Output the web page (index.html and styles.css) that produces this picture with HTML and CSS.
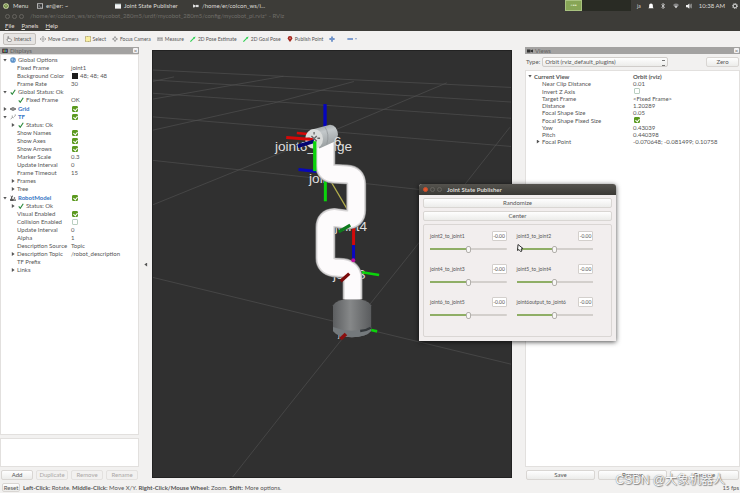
FILE: index.html
```html
<!DOCTYPE html>
<html lang="en">
<head>
    <meta charset="utf-8">
    <title>RViz</title>
    <link rel="stylesheet" href="styles.css">
</head>
<body>
    <header class="desktop-bar">
        <div class="desk-menu">
            <svg class="icon" viewBox="0 0 16 16"><circle cx="8" cy="8" r="7.500" fill="#c9d8a0"/><circle cx="8" cy="8" r="4" fill="none" stroke="#5f7a35" stroke-width="2"/><path d="M5 5v5h5V6" fill="none" stroke="#5f7a35" stroke-width="1.500"/></svg>
            Menu
        </div>
        <div class="task">
            <svg class="icon" viewBox="0 0 16 16"><rect x="1" y="2" width="14" height="12" fill="#333" stroke="#d8d8d8" stroke-width="2"/><path d="M4 6l3 2-3 2M8 11h4" stroke="#ddd" stroke-width="1.500" fill="none"/></svg>
            er@er: ~
        </div>
        <div class="task">
            <svg class="icon" viewBox="0 0 16 16"><rect y="2" width="16" height="13" fill="#f4f4f4"/><path d="M0 4h16" stroke="#bcc" stroke-width="2"/></svg>
            Joint State Publisher
        </div>
        <div class="task">
            <svg class="icon" viewBox="0 0 16 16"><path d="M1 4v8M4 5v6M1 8h7" stroke="#ddd" stroke-width="3"/><path d="M8 5h7v6H8z" fill="#ddd"/></svg>
            /home/er/colcon_ws/i...
        </div>
        <div class="workspaces"><span class="space current">▫▪▪</span><span class="space"></span></div>
        <div class="tray">
            <span class="lang">ja</span>
            <svg class="icon" viewBox="0 0 16 16"><path d="M8 1c3 0 5 2 5 6v4l2 3H1l2-3V7c0-4 2-6 5-6z" fill="#fff"/></svg>
            <svg class="icon" viewBox="0 0 16 16"><path d="M4 4l8 7-4 4V1l4 4-8 7" fill="none" stroke="#ddd" stroke-width="2"/></svg>
            <svg class="icon" viewBox="0 0 16 16"><path d="M0 5q8-7 16 0l-8 9z" fill="#888"/><path d="M4 9q4-3 8 0l-4 5z" fill="#ccc"/></svg>
            <svg class="icon" viewBox="0 0 16 16"><path d="M0 5h4l5-4v14l-5-4H0z" fill="#eee"/><path d="M11 4v8M14 2v12" stroke="#bbb" stroke-width="2"/></svg>
            <span>10:38 AM</span>
            <svg class="icon" viewBox="0 0 16 16"><circle cx="8" cy="8" r="5" fill="none" stroke="#e4e4e4" stroke-width="2.500"/><circle cx="8" cy="8" r="7" fill="none" stroke="#e4e4e4" stroke-width="2" stroke-dasharray="2.750"/></svg>
        </div>
    </header>
    <div class="title-bar">
        <span class="win-dot"></span><span class="win-dot"></span><span class="win-dot"></span>
        <span class="title-path">/home/er/colcon_ws/src/mycobot_280m5/urdf/mycobot_280m5/config/mycobot_pi.rviz* - RViz</span>
    </div>
    <nav class="menu-bar">
        <a href="#"><u>F</u>ile</a>
        <a href="#"><u>P</u>anels</a>
        <a href="#"><u>H</u>elp</a>
    </nav>

    <div class="toolbar">
        <button class="tool selected"><svg class="icon" viewBox="0 0 16 16"><path d="M5 9V2q1-2 2 0v5l6 1q2 1 1 4l-1 3H6L2 10q1-2 3-1z" fill="#fff" stroke="#555" stroke-width="1.500"/></svg>Interact</button>
        <button class="tool"><svg class="icon" viewBox="0 0 16 16"><path d="M8 1v14M1 8h14M5 4l3-3 3 3M5 12l3 3 3-3M3 5L0 8l3 3M13 5l3 3-3 3" fill="none" stroke="#888" stroke-width="1.500"/></svg>Move Camera</button>
        <button class="tool"><svg class="icon" viewBox="0 0 16 16"><rect x="1" y="1" width="14" height="14" fill="#fbf0a0" stroke="#9a8c50" stroke-width="2" stroke-dasharray="3 1"/></svg>Select</button>
        <button class="tool"><svg class="icon" viewBox="0 0 16 16"><path d="M8 0v16M0 8h16" stroke="#888" stroke-width="2"/><circle cx="8" cy="8" r="4" fill="#eee" stroke="#888" stroke-width="2"/></svg>Focus Camera</button>
        <button class="tool"><svg class="icon" viewBox="0 0 16 16"><rect x="0" y="5" width="16" height="7" fill="#ccc" stroke="#777"/><path d="M4 5v4M8 5v4M12 5v4" stroke="#555"/></svg>Measure</button>
        <button class="tool"><svg class="icon" viewBox="0 0 16 16"><path d="M1 15L11 5" stroke="#2ed052" stroke-width="3"/><path d="M8 4l7-3-3 7z" fill="#2ed052"/></svg>2D Pose Estimate</button>
        <button class="tool"><svg class="icon" viewBox="0 0 16 16"><path d="M1 15L11 5" stroke="#2ed052" stroke-width="3"/><path d="M8 4l7-3-3 7z" fill="#2ed052"/></svg>2D Goal Pose</button>
        <button class="tool"><svg class="icon" viewBox="0 0 16 16"><path d="M8 16Q2 9 2 6a6 6 0 0 1 12 0q0 3-6 10z" fill="#a3261c"/><circle cx="8" cy="6" r="2" fill="#e99"/></svg>Publish Point</button>
        <button class="tool" aria-label="Add tool"><svg class="icon" viewBox="0 0 16 16"><path d="M8 1v14M1 8h14" stroke="#6f93c9" stroke-width="5"/></svg></button>
        <button class="tool last" aria-label="Remove tool"><svg class="icon" viewBox="0 0 16 16"><path d="M1 8h15" stroke="#5b83c4" stroke-width="4"/></svg><i class="drop"></i></button>
    </div>

    <main class="workspace">
        <section class="panel displays">
            <h2 class="panel-head">
                <svg class="icon" viewBox="0 0 16 16"><rect x="1" y="2" width="14" height="11" fill="#222"/><path d="M3 4h3v7H3z" fill="#c55"/><path d="M6 4h4v7H6z" fill="#6b6"/><path d="M10 4h3v7h-3z" fill="#56c"/></svg>
                Displays<button class="close" aria-label="Close Displays">×</button>
            </h2>
            <div class="tree">
                <div class="group">
                    <div class="row"><span class="name"><i class="arrow open"></i><span class="glyph"><svg class="icon" viewBox="0 0 16 16"><circle cx="8" cy="8" r="7.500" fill="#5c92c9"/><path d="M3 5l4-2 2 4-3 4zM10 8l4-1-2 5z" fill="#a6c4e2"/></svg></span>Global Options</span></div>
                    <div class="row sub"><span class="name"><i class="arrow"></i>Fixed Frame</span><span class="value">joint1</span></div>
                    <div class="row sub"><span class="name"><i class="arrow"></i>Background Color</span><span class="value"><i class="swatch"></i>48; 48; 48</span></div>
                    <div class="row sub"><span class="name"><i class="arrow"></i>Frame Rate</span><span class="value">30</span></div>
                    <div class="row"><span class="name"><i class="arrow open"></i><span class="glyph"><svg class="icon" viewBox="0 0 16 16"><path d="M2 9l4 5 8-12" class="tick"/></svg></span>Global Status: Ok</span></div>
                    <div class="row sub"><span class="name"><i class="arrow"></i><span class="glyph"><svg class="icon" viewBox="0 0 16 16"><path d="M2 9l4 5 8-12" class="tick"/></svg></span>Fixed Frame</span><span class="value">OK</span></div>
                </div>
                <div class="group">
                    <div class="row"><span class="name"><i class="arrow closed"></i><span class="glyph"><svg class="icon" viewBox="0 0 16 16"><path d="M0 8l8-4 8 4-8 4z" fill="#999" stroke="#555" stroke-width="2"/></svg></span><label class="display" for="grid">Grid</label></span><span class="value"><input type="checkbox" id="grid" checked></span></div>
                    <div class="row"><span class="name"><i class="arrow open"></i><span class="glyph"><svg class="icon" viewBox="0 0 16 16"><path d="M2 14l4-5V4M6 9l4 1M11 7l3-2V1" fill="none" stroke="#888" stroke-width="2"/></svg></span><label class="display" for="tf">TF</label></span><span class="value"><input type="checkbox" id="tf" checked></span></div>
                    <div class="row sub"><span class="name"><i class="arrow closed"></i><span class="glyph"><svg class="icon" viewBox="0 0 16 16"><path d="M2 9l4 5 8-12" class="tick"/></svg></span>Status: Ok</span></div>
                    <div class="row sub"><span class="name"><i class="arrow"></i><label for="names">Show Names</label></span><span class="value"><input type="checkbox" id="names" checked></span></div>
                    <div class="row sub"><span class="name"><i class="arrow"></i><label for="axes">Show Axes</label></span><span class="value"><input type="checkbox" id="axes" checked></span></div>
                    <div class="row sub"><span class="name"><i class="arrow"></i><label for="arrows">Show Arrows</label></span><span class="value"><input type="checkbox" id="arrows" checked></span></div>
                    <div class="row sub"><span class="name"><i class="arrow"></i>Marker Scale</span><span class="value">0.3</span></div>
                    <div class="row sub"><span class="name"><i class="arrow"></i>Update Interval</span><span class="value">0</span></div>
                    <div class="row sub"><span class="name"><i class="arrow"></i>Frame Timeout</span><span class="value">15</span></div>
                    <div class="row sub"><span class="name"><i class="arrow closed"></i>Frames</span></div>
                    <div class="row sub"><span class="name"><i class="arrow closed"></i>Tree</span></div>
                </div>
                <div class="group">
                    <div class="row"><span class="name"><i class="arrow open"></i><span class="glyph"><svg class="icon" viewBox="0 0 16 16"><path d="M1 15h8v-4H1zM4 11V5l4-3M4 5L2 2" fill="#444" stroke="#444" stroke-width="2"/><circle cx="12" cy="8" r="2" fill="#444"/><path d="M10 12h6v3h-6z" fill="#444"/></svg></span><label class="display" for="model">RobotModel</label></span><span class="value"><input type="checkbox" id="model" checked></span></div>
                    <div class="row sub"><span class="name"><i class="arrow closed"></i><span class="glyph"><svg class="icon" viewBox="0 0 16 16"><path d="M2 9l4 5 8-12" class="tick"/></svg></span>Status: Ok</span></div>
                    <div class="row sub"><span class="name"><i class="arrow"></i><label for="visual">Visual Enabled</label></span><span class="value"><input type="checkbox" id="visual" checked></span></div>
                    <div class="row sub"><span class="name"><i class="arrow"></i><label for="collision">Collision Enabled</label></span><span class="value"><input type="checkbox" id="collision"></span></div>
                    <div class="row sub"><span class="name"><i class="arrow"></i>Update Interval</span><span class="value">0</span></div>
                    <div class="row sub"><span class="name"><i class="arrow"></i>Alpha</span><span class="value">1</span></div>
                    <div class="row sub"><span class="name"><i class="arrow"></i>Description Source</span><span class="value">Topic</span></div>
                    <div class="row sub"><span class="name"><i class="arrow closed"></i>Description Topic</span><span class="value">/robot_description</span></div>
                    <div class="row sub"><span class="name"><i class="arrow"></i>TF Prefix</span></div>
                    <div class="row sub"><span class="name"><i class="arrow closed"></i>Links</span></div>
                </div>
            </div>
            <div class="help-box"></div>
            <div class="actions">
                <button>Add</button>
                <button disabled>Duplicate</button>
                <button disabled>Remove</button>
                <button disabled>Rename</button>
            </div>
        </section>

        <div class="splitter"><i class="arrow back"></i></div>

        <div class="viewport">
            <svg class="scene" viewBox="6 18 1080 1284" preserveAspectRatio="xMidYMid slice">
                <defs>
                    <linearGradient id="base" x1="0" x2="1">
                        <stop offset="0" stop-color="#5c5e60"/>
                        <stop offset="0.450" stop-color="#868889"/>
                        <stop offset="1" stop-color="#5a5c5e"/>
                    </linearGradient>
                    <linearGradient id="head" x1="0" y1="0" x2="0.300" y2="1">
                        <stop offset="0" stop-color="#8f9496"/>
                        <stop offset="0.400" stop-color="#c3c8ca"/>
                        <stop offset="1" stop-color="#9a9fa1"/>
                    </linearGradient>
                </defs>
                <!-- ground grid -->
                <g class="grid-lines">
                    <path d="M0 75L1090 128M0 105L1090 172M0 145L1090 221M0 216L1090 306M0 347L1090 466M0 699L1090 963"/>
                    <path d="M245 1304L415 1088L775 638L1082 248M0 484L380 330L892 114M0 258L370 175L612 110M0 164L400 94M0 111L70 96"/>
                </g>
                <!-- frame names -->
                <g class="frame-name">
                    <text x="374" y="319">joint6_flange</text>
                    <text x="477" y="416">joint5</text>
                    <text x="554" y="562">joint4</text>
                    <text x="549" y="706">joint3</text>
                </g>
                <text class="frame-name small" x="564" y="881">joint1</text>
                <path d="M545 415L592 495" stroke="#b5b04c" stroke-width="4"/>
                <path d="M526 405V471" stroke="#0bd30b" stroke-width="9"/>
                <path d="M445 375L500 381" stroke="#0808b8" stroke-width="9"/>
                <path d="M525 178V250" stroke="#0505bd" stroke-width="10"/>
                <path d="M440 265L480 269" stroke="#d40808" stroke-width="8"/>
                <path d="M611 550V603" stroke="#d20a0a" stroke-width="9"/>
                <path d="M611 603V652" stroke="#0808c4" stroke-width="9"/>
                <path d="M636 685L688 693" stroke="#0bd30b" stroke-width="8"/>
                <!-- base -->
                <path d="M549 784Q560 766 606 764Q654 766 664 784V862Q650 880 606 881Q562 880 549 862z" fill="url(#base)"/>
                <path d="M549 850Q606 872 664 850V862Q650 880 606 881Q562 880 549 862z" fill="#74797c"/>
                <path d="M631 862Q650 860 663 852" fill="none" stroke="#34383b" stroke-width="7"/>
                <path d="M664 859L682 863" stroke="#0bd30b" stroke-width="8"/>
                <path d="M572 886L588 871" stroke="#8a0f0f" stroke-width="11"/>
                <!-- arm links -->
                <g class="arm">
                    <path class="edge" d="M526 290V364Q526 387 553 388L590 390Q619 391 619 420V498Q619 526 590 526L553 521Q526 522 526 550V642Q526 666 552 670L578 672Q608 676 608 704V766"/>
                    <path class="shade" d="M526 290V364Q526 387 553 388L590 390Q619 391 619 420V498Q619 526 590 526L553 521Q526 522 526 550V642Q526 666 552 670L578 672Q608 676 608 704V766"/>
                    <path class="skin" d="M526 290V364Q526 387 553 388L590 390Q619 391 619 420V498Q619 526 590 526L553 521Q526 522 526 550V642Q526 666 552 670L578 672Q608 676 608 704V766"/>
                </g>
                <path d="M566 563L601 543" stroke="#0e7a1d" stroke-width="10"/>
                <path d="M572 712L598 689" stroke="#7c0b0b" stroke-width="10"/>
                <circle cx="610" cy="649" r="6" fill="#c2109a"/>
                <!-- wrist and flange -->
                <path d="M480 256L540 240Q562 242 564 270Q562 288 548 294L508 312z" fill="url(#head)"/>
                <path d="M524 246Q540 268 530 300" fill="none" stroke="#8a8f91" stroke-width="2"/>
                <ellipse cx="492" cy="283" rx="27" ry="30" fill="#dadcdb"/>
                <path d="M492 262v8M492 292v8M472 281h8M502 281h8M484 274l16 16M500 274l-16 16" stroke="#666" stroke-width="4"/>
                <path d="M408 279L488 285" stroke="#d40808" stroke-width="9"/>
                <path d="M443 305L492 290" stroke="#050570" stroke-width="11"/>
                <path d="M494 290V380" stroke="#0bd30b" stroke-width="10"/>
                <text class="frame-name" x="551" y="303">6</text>
            </svg>
        </div>

        <div class="splitter"></div>

        <section class="panel views">
            <h2 class="panel-head">
                <svg class="icon" viewBox="0 0 16 16"><path d="M0 4h9v8H0zM10 6l6-2v8l-6-2z" fill="#333"/></svg>
                Views<button class="close" aria-label="Close Views">×</button>
            </h2>
            <div class="type-row">
                <label for="type">Type:</label>
                <span class="select-wrap"><select id="type"><option>Orbit (rviz_default_plugins)</option></select></span>
                <button class="zero">Zero</button>
            </div>
            <div class="tree">
                <div class="row head"><span class="name"><i class="arrow open"></i>Current View</span><span class="value">Orbit (rviz)</span></div>
                <div class="row sub"><span class="name"><i class="arrow"></i>Near Clip Distance</span><span class="value">0.01</span></div>
                <div class="row sub check"><span class="name"><i class="arrow"></i><label for="invert">Invert Z Axis</label></span><span class="value"><input type="checkbox" id="invert"></span></div>
                <div class="row sub"><span class="name"><i class="arrow"></i>Target Frame</span><span class="value">&lt;Fixed Frame&gt;</span></div>
                <div class="row sub"><span class="name"><i class="arrow"></i>Distance</span><span class="value">1.20289</span></div>
                <div class="row sub"><span class="name"><i class="arrow"></i>Focal Shape Size</span><span class="value">0.05</span></div>
                <div class="row sub check"><span class="name"><i class="arrow"></i><label for="focal">Focal Shape Fixed Size</label></span><span class="value"><input type="checkbox" id="focal" checked></span></div>
                <div class="row sub"><span class="name"><i class="arrow"></i>Yaw</span><span class="value">0.43039</span></div>
                <div class="row sub"><span class="name"><i class="arrow"></i>Pitch</span><span class="value">0.440398</span></div>
                <div class="row sub"><span class="name"><i class="arrow closed"></i>Focal Point</span><span class="value">-0.070648; -0.081499; 0.10758</span></div>
            </div>
            <div class="actions">
                <button>Save</button>
                <button>Remove</button>
                <button>Rename</button>
            </div>
        </section>
    </main>

    <footer class="status-bar">
        <button>Reset</button>
        <span><b>Left-Click:</b> Rotate. <b>Middle-Click:</b> Move X/Y. <b>Right-Click/Mouse Wheel:</b> Zoom. <b>Shift:</b> More options.</span>
        <span class="fps">15 fps</span>
    </footer>

    <!-- floating joint slider window -->
    <section class="dialog">
        <h2 class="dialog-title"><span class="win-dot red"></span><span class="win-dot"></span><span class="win-dot"></span><span>Joint State Publisher</span></h2>
        <div class="dialog-body">
            <button class="wide">Randomize</button>
            <button class="wide">Center</button>
            <div class="joints">
                <div class="joint"><label for="j1">joint2_to_joint1</label><input type="text" value="-0.00" aria-label="joint2_to_joint1 value"><input type="range" id="j1"></div>
                <div class="joint"><label for="j2">joint3_to_joint2</label><input type="text" value="-0.00" aria-label="joint3_to_joint2 value"><input type="range" id="j2"></div>
                <div class="joint"><label for="j3">joint4_to_joint3</label><input type="text" value="-0.00" aria-label="joint4_to_joint3 value"><input type="range" id="j3"></div>
                <div class="joint"><label for="j4">joint5_to_joint4</label><input type="text" value="-0.00" aria-label="joint5_to_joint4 value"><input type="range" id="j4"></div>
                <div class="joint"><label for="j5">joint6_to_joint5</label><input type="text" value="-0.00" aria-label="joint6_to_joint5 value"><input type="range" id="j5"></div>
                <div class="joint"><label for="j6">joint6output_to_joint6</label><input type="text" value="-0.00" aria-label="joint6output_to_joint6 value"><input type="range" id="j6"></div>
            </div>
        </div>
        <svg class="pointer" viewBox="0 0 16 16"><path d="M4 1l10 8-4 1 2 4-3 1-3-4-3 2z" fill="#fff" stroke="#333" stroke-width="2"/></svg>
    </section>

    <div class="watermark">CSDN @大象机器人</div>
</body>
</html>
```

FILE: styles.css
```css
* {
    box-sizing: border-box;
}

body {
    margin: 0;
    height: 100vh;
    display: flex;
    flex-direction: column;
    overflow: hidden;
    position: relative;
    background: #f2f1f0;
    color: #555;
    font: 6px/8px Lato, "Noto Sans CJK SC", sans-serif;
}

button, input, select {
    font: inherit;
    color: inherit;
    margin: 0;
    padding: 0;
}

h2 {
    margin: 0;
    font: inherit;
}

a {
    color: inherit;
    text-decoration: none;
}

.icon {
    width: 6px;
    height: 6px;
    flex: none;
}

/* desktop panel */
.desktop-bar {
    height: 11px;
    display: flex;
    align-items: center;
    background: #3d3c38;
    color: #dcdad5;
}

.desk-menu {
    width: 37px;
    padding-left: 3px;
    display: flex;
    align-items: center;
    gap: 4px;
}

.task {
    width: 78px;
    display: flex;
    align-items: center;
    gap: 3px;
    white-space: nowrap;
}

.workspaces {
    display: flex;
    align-self: stretch;
    margin-left: auto;
    background: #292b24;
}

.space {
    width: 49px;
}

.space.current {
    width: 17px;
    background: #87a556;
    border: 1px solid #a9c280;
    color: #dbe8c2;
    text-align: center;
    font-size: 5px;
}

.tray {
    width: 109px;
    padding: 0 2px 0 6px;
    display: flex;
    align-items: center;
    justify-content: space-between;
}

.lang {
    font-size: 5px;
}

.title-bar {
    height: 10px;
    padding-left: 5px;
    display: flex;
    align-items: center;
    gap: 2px;
    background: #3d3c38;
    color: #6f6d68;
    white-space: nowrap;
}

.title-path {
    margin-left: 4px;
}

.win-dot {
    width: 5px;
    height: 5px;
    border: 1px solid #66645f;
    border-radius: 50%;
}

.win-dot.red {
    background: #e2552c;
    border-color: #c8502e;
}

.menu-bar {
    height: 10px;
    padding-left: 5px;
    display: flex;
    align-items: center;
    gap: 7px;
    background: #3d3c38;
    color: #e0ded9;
}

/* tools */
.toolbar {
    height: 16px;
    padding-left: 3px;
    display: flex;
    align-items: center;
    gap: 2px;
    font-size: 5px;
}

.tool {
    height: 12px;
    padding: 0 2px;
    display: flex;
    align-items: center;
    gap: 2px;
    border: 0;
    background: none;
}

.tool.selected {
    padding: 0 4px 0 2px;
    border: 1px solid #c4c0bc;
    border-radius: 2px;
    background: #e6e4e2;
}

.tool.last {
    margin-left: 6px;
}

.drop {
    border: 1px solid transparent;
    border-top: 2px solid #8aa3c9;
}

.workspace {
    flex: 1;
    min-height: 0;
    display: flex;
}

.panel {
    display: flex;
    flex-direction: column;
    min-height: 0;
}

.displays {
    width: 139px;
}

.views {
    width: 215px;
}

.panel-head {
    height: 7px;
    padding: 0 1px 0 2px;
    display: flex;
    align-items: center;
    gap: 2px;
    background: #a3a2a1;
    color: #626160;
    line-height: 7px;
}

.close {
    width: 5px;
    height: 5px;
    margin-left: auto;
    border: 0;
    border-radius: 1px;
    background: #f4f4f4;
    line-height: 5px;
}

/* property trees */
.tree {
    flex: 1;
    padding-top: 1px;
    background: #fff;
    border: 1px solid #e2e0de;
    white-space: nowrap;
}

.group {
    padding-bottom: 1px;
}

.row {
    height: 8px;
    display: flex;
    align-items: center;
}

.name {
    width: 70px;
    display: flex;
    align-items: center;
}

.sub .name {
    padding-left: 8px;
}

.value {
    display: flex;
    align-items: center;
}

.glyph {
    width: 9px;
    height: 6px;
    padding-left: 1px;
}

.arrow {
    width: 8px;
    height: 4px;
    flex: none;
}

.arrow.open, .arrow.closed, .arrow.back {
    width: 4px;
    margin: 0 2px;
    background: #555;
}

.arrow.open {
    height: 3px;
    clip-path: polygon(0 0, 100% 0, 50% 100%);
}

.arrow.closed {
    clip-path: polygon(20% 0, 90% 50%, 20% 100%);
}

.arrow.back {
    clip-path: polygon(90% 0, 20% 50%, 90% 100%);
}

.display {
    color: #3574c4;
    font-weight: bold;
}

.tick {
    fill: none;
    stroke: #2c8a3c;
    stroke-width: 3;
}

.swatch {
    width: 6px;
    height: 6px;
    margin: 0 2px 0 1px;
    background: #1c1c1c;
}

input[type="checkbox"] {
    appearance: none;
    width: 6px;
    height: 6px;
    margin-left: 1px;
    border: 1px solid #b9cfc0;
    border-radius: 1px;
    background: #fff;
    position: relative;
}

input[type="checkbox"]:checked {
    border-color: #5c9a20;
    background: #5c9a20;
}

input[type="checkbox"]:checked::after {
    content: '';
    position: absolute;
    left: 1px;
    top: 0;
    width: 2px;
    height: 3px;
    border: solid #fff;
    border-width: 0 1px 1px 0;
    transform: rotate(40deg);
}

.help-box {
    height: 29px;
    margin-top: 3px;
    background: #fff;
    border: 1px solid #e2e0de;
}

.actions {
    padding: 3px 1px 2px;
    display: flex;
    gap: 3px;
}

.actions button, .status-bar button, .zero, .wide {
    flex: 1;
    height: 10px;
    border: 1px solid #d9d6d3;
    border-radius: 2px;
    background: linear-gradient(#fefefe, #ececea);
    line-height: 8px;
}

.actions button:disabled {
    border-color: #e3e1df;
    background: #f2f1f0;
    color: #aaa8a6;
}

.splitter {
    width: 13px;
    display: flex;
    align-items: center;
    justify-content: center;
}

.viewport {
    flex: 1;
    min-width: 0;
    margin: 3px 0 4px;
    background: #303030;
    border: 1px solid #222;
}

.scene {
    display: block;
    width: 100%;
    height: 100%;
}

.grid-lines {
    fill: none;
    stroke: #505050;
    stroke-width: 2;
}

.frame-name {
    fill: #dedede;
    font-family: "Liberation Sans", sans-serif;
    font-size: 41px;
}

.frame-name.small {
    font-size: 24px;
}

.arm path {
    fill: none;
}

.arm .edge {
    stroke: #8c8c8c;
    stroke-width: 60;
}

.arm .shade {
    stroke: #d6d4d5;
    stroke-width: 56;
}

.arm .skin {
    stroke: #fdfbfc;
    stroke-width: 48;
}

/* views panel */
.type-row {
    padding: 3px 1px;
    display: flex;
    align-items: center;
    gap: 2px;
}

.select-wrap {
    width: 126px;
    position: relative;
}

.select-wrap::after {
    content: '';
    position: absolute;
    right: 3px;
    top: 3px;
    width: 3px;
    height: 4px;
    border: solid #777;
    border-width: 1px 0;
}

select {
    appearance: none;
    display: block;
    width: 100%;
    height: 10px;
    padding-left: 2px;
    border: 1px solid #d0cdca;
    border-radius: 2px;
    background: linear-gradient(#fefefe, #ececea);
}

.zero {
    flex: none;
    width: 33px;
    margin-left: auto;
}

.views .tree {
    line-height: 7px;
}

.views .row {
    height: 7px;
}

.views .row.head, .views .row.check {
    height: 8px;
}

.head {
    font-weight: bold;
}

.views .name {
    width: 107px;
}

/* status line */
.status-bar {
    height: 11px;
    padding: 0 1px 0 2px;
    display: flex;
    align-items: center;
    gap: 3px;
    white-space: nowrap;
}

.status-bar button {
    flex: none;
    width: 18px;
    height: 9px;
    line-height: 7px;
}

.fps {
    margin-left: auto;
}

/* floating window */
.dialog {
    position: absolute;
    left: 419px;
    top: 184px;
    width: 197px;
    background: #f2eeee;
    border-radius: 3px 3px 0 0;
    box-shadow: 0 1px 5px rgba(0, 0, 0, 0.7);
}

.dialog-title {
    height: 11px;
    padding-left: 4px;
    display: flex;
    align-items: center;
    gap: 2px;
    border-radius: 3px 3px 0 0;
    background: linear-gradient(#55534e, #3a3935);
    color: #dcdad5;
    font-weight: bold;
}

.dialog-title span:last-child {
    margin-left: 3px;
}

.dialog-body {
    padding: 3px 4px 4px;
    display: flex;
    flex-direction: column;
    gap: 3px;
}

.wide {
    flex: none;
}

.joints {
    height: 113px;
    padding: 6px 18px 0 6px;
    display: grid;
    grid-template-columns: 1fr 1fr;
    grid-auto-rows: 33px;
    column-gap: 10px;
    border: 1px solid #dad6d4;
    border-radius: 2px;
}

.joint {
    display: flex;
    flex-wrap: wrap;
    align-items: center;
    align-content: flex-start;
    justify-content: space-between;
    row-gap: 4px;
    font-size: 5px;
    white-space: nowrap;
}

.joint input[type="text"] {
    width: 15px;
    height: 10px;
    border: 1px solid #d3cfcc;
    border-radius: 1px;
    background: #fff;
    text-align: center;
}

input[type="range"] {
    appearance: none;
    width: 100%;
    height: 8px;
    background: linear-gradient(90deg, #8fae66 50%, #d3cfcc 50%) center / 100% 2px no-repeat;
}

input[type="range"]::-webkit-slider-thumb {
    appearance: none;
    width: 5px;
    height: 7px;
    border: 1px solid #b3b0ac;
    border-radius: 2px;
    background: #f8f7f6;
}

.pointer {
    position: absolute;
    left: 97px;
    top: 60px;
    width: 8px;
    height: 8px;
}

.watermark {
    position: absolute;
    right: 15px;
    bottom: 4px;
    color: #fafafa;
    font: 12px/18px "Liberation Sans", "Noto Sans CJK SC", sans-serif;
    text-shadow: 0 0 1px #666, 1px 1px 1px #888;
}
```
